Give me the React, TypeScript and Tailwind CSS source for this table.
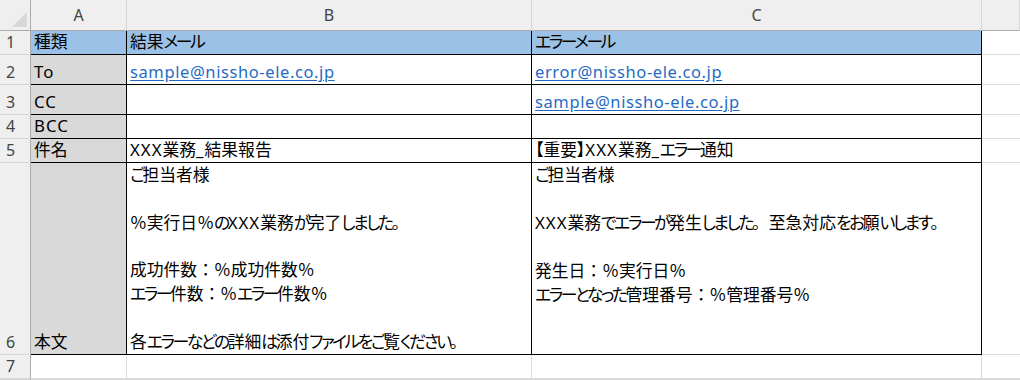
import type { ReactNode } from "react";

// Spreadsheet view: mail template sheet (result mail / error mail)

const FONT = "font-['Noto_Sans','Noto_Sans_CJK_JP',sans-serif]";

const headCell = "bg-[#efefef] text-[#444] text-[16px] leading-[24px]";

const RUNS = /([\u3041-\u30ff]+|[\u0020-\u007e]+|[【】]+)/;

function Jp({ text }: { text: string }) {
  return (
    <>
      {text
        .split(RUNS)
        .filter(Boolean)
        .map((part, i) => {
          if (/^[\u3041-\u30ff]/.test(part))
            return (
              <span key={i} className="[font-feature-settings:'palt'] tracking-[-2.4px]">
                {part}
              </span>
            );
          if (/^[\u0020-\u007e]/.test(part))
            return (
              <span key={i} className="tracking-[1px]">
                {part}
              </span>
            );
          if (/^[【】]/.test(part))
            return (
              <span key={i} className="[font-feature-settings:'palt']">
                {part}
              </span>
            );
          return <span key={i}>{part}</span>;
        })}
    </>
  );
}

function ColHead({ label }: { label: string }) {
  return (
    <div
      className={`${headCell} border-r border-r-[#d6d6d6] border-b border-b-[#ababab] flex items-end justify-center pb-[3px]`}
    >
      {label}
    </div>
  );
}

function RowHead({ n }: { n?: number }) {
  return (
    <div
      className={`${headCell} border-r border-r-[#ababab] border-b border-b-[#d6d6d6] flex items-end pl-[6px]`}
    >
      {n}
    </div>
  );
}

interface CellProps {
  children?: ReactNode;
  fill?: string;
  top?: boolean;
}

// Cell inside the bordered table (black grid)
function Cell({ children, fill = "bg-white", top }: CellProps) {
  return (
    <div
      className={`${fill} border-r border-b border-black flex ${
        top ? "flex-col" : "items-end"
      } px-[3px] text-[16.8px] leading-[24px] text-black whitespace-nowrap`}
    >
      {typeof children === "string" ? <Jp text={children} /> : children}
    </div>
  );
}

// Plain cell outside the table (light gridlines)
function Blank({ right = true }: { right?: boolean }) {
  return (
    <div
      className={`bg-white border-b border-b-[#dadada] ${right ? "border-r border-r-[#dadada]" : ""}`}
    />
  );
}

function Link({ href }: { href: string }) {
  return (
    <span className="text-[#1f6bc4] text-[16.5px] underline underline-offset-[2px] tracking-[0.6px]">
      {href}
    </span>
  );
}

const resultBody = [
  "ご担当者様",
  "",
  "％実行日％のXXX業務が完了しました。",
  "",
  "成功件数：％成功件数％",
  "エラー件数：％エラー件数％",
  "",
  "各エラーなどの詳細は添付ファイルをご覧ください。",
];

const errorBody = [
  "ご担当者様",
  "",
  "XXX業務でエラーが発生しました。至急対応をお願いします。",
  "",
  "発生日：％実行日％",
  "エラーとなった管理番号：％管理番号％",
  "",
  "",
];

function Body({ lines }: { lines: string[] }) {
  return (
    <>
      {lines.map((l, i) => (
        <div key={i} className="h-[24px]">
          <Jp text={l} />
        </div>
      ))}
    </>
  );
}

export default function App() {
  const gray = "bg-[#d9d9d9]";
  const blue = "bg-[#9bc2e6]";

  return (
    <div
      className={`${FONT} w-[1020px] h-[380px] overflow-hidden bg-white grid grid-cols-[31px_96px_405px_450px_1fr] grid-rows-[31px_24px_30px_30px_24px_24px_192px_24px_1fr]`}
    >
      {/* column headers */}
      <div className="bg-[#efefef] border-r border-r-[#ababab] border-b border-b-[#ababab] relative">
        <svg className="absolute left-0 top-0" width="30" height="30">
          <polygon points="27,12 27,27 12,27" fill="#d8d8d8" />
        </svg>
      </div>
      <ColHead label="A" />
      <ColHead label="B" />
      <ColHead label="C" />
      <ColHead label="" />

      {/* 1 */}
      <RowHead n={1} />
      <Cell fill={blue}>種類</Cell>
      <Cell fill={blue}>結果メール</Cell>
      <Cell fill={blue}>エラーメール</Cell>
      <Blank right={false} />

      {/* 2 */}
      <RowHead n={2} />
      <Cell fill={gray}>To</Cell>
      <Cell>
        <Link href="sample@nissho-ele.co.jp" />
      </Cell>
      <Cell>
        <Link href="error@nissho-ele.co.jp" />
      </Cell>
      <Blank right={false} />

      {/* 3 */}
      <RowHead n={3} />
      <Cell fill={gray}>CC</Cell>
      <Cell />
      <Cell>
        <Link href="sample@nissho-ele.co.jp" />
      </Cell>
      <Blank right={false} />

      {/* 4 */}
      <RowHead n={4} />
      <Cell fill={gray}>BCC</Cell>
      <Cell />
      <Cell />
      <Blank right={false} />

      {/* 5 */}
      <RowHead n={5} />
      <Cell fill={gray}>件名</Cell>
      <Cell>XXX業務_結果報告</Cell>
      <Cell>【重要】XXX業務_エラー通知</Cell>
      <Blank right={false} />

      {/* 6 */}
      <RowHead n={6} />
      <Cell fill={gray}>本文</Cell>
      <Cell top>
        <Body lines={resultBody} />
      </Cell>
      <Cell top>
        <Body lines={errorBody} />
      </Cell>
      <Blank right={false} />

      {/* 7 */}
      <RowHead n={7} />
      <Blank />
      <Blank />
      <Blank />
      <Blank right={false} />

      {/* 8 */}
      <RowHead />
      <Blank />
      <Blank />
      <Blank />
      <Blank right={false} />
    </div>
  );
}
